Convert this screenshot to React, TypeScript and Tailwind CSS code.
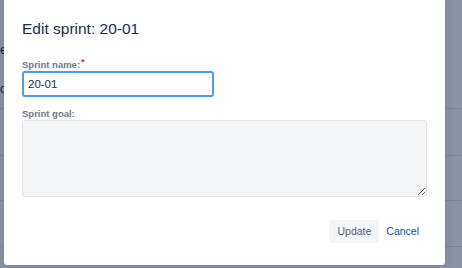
import React from 'react';

const font = { fontFamily: '"Liberation Sans", Arial, sans-serif' };

const BackgroundPage: React.FC = () => {
  return (
    <div className="flex h-full flex-col bg-white text-[#172b4d]">
      <div className="h-[108px] pt-[42px]">
        <div className="text-[13px] leading-[16px]">e</div>
        <div className="mt-[24px] text-[12px] leading-[14px]">o</div>
      </div>
      <div className="h-[47px] border-t border-[#dfe1e6]" />
      <div className="h-[45px] border-t border-[#dfe1e6]" />
      <div className="h-[46px] border-t border-[#dfe1e6]" />
      <div className="flex-1 border-t border-[#dfe1e6]" />
    </div>
  );
};

const EditSprintModal: React.FC = () => {
  return (
    <div className="absolute left-[4px] top-[-4px] flex h-[269px] w-[441px] flex-col rounded-[3px] bg-white pl-[18px] pr-[18px] pt-[24px] shadow-[0_0_8px_rgba(9,30,66,0.15)]">
      <h2 className="text-[15.5px] font-normal leading-[18px] text-[#172b4d]">Edit sprint: 20-01</h2>

      <label className="mt-[21px] text-[9.5px] font-semibold leading-[11px] text-[#6b778c]">
        Sprint name:<span className="relative -top-[3px] ml-[1px] text-[#de350b]">*</span>
      </label>
      <input
        type="text"
        defaultValue="20-01"
        className="mt-[1px] h-[26px] w-[192px] rounded-[3px] border-2 border-[#4c9aff] bg-white px-[4px] text-[11.5px] text-[#172b4d] outline-none"
        style={font}
      />

      <label className="mt-[11px] text-[9.5px] font-semibold leading-[11px] text-[#6b778c]">Sprint goal:</label>
      <textarea
        className="mt-[1px] h-[77px] w-[405px] rounded-[3px] border border-[#e2e4e9] bg-[#f4f5f7] outline-none"
        style={font}
      />

      <div className="mt-[23px] flex justify-end pr-[1px]">
        <button className="h-[23px] rounded-[3px] bg-[#f4f5f7] px-[8px] text-[10.5px] text-[#505f79]">Update</button>
        <button className="h-[23px] rounded-[3px] px-[7px] text-[10.5px] text-[#0052cc]">Cancel</button>
      </div>
    </div>
  );
};

const App: React.FC = () => {
  return (
    <div className="relative h-[268px] w-[462px] overflow-hidden" style={font}>
      <BackgroundPage />
      <div className="absolute inset-0 bg-[rgba(9,30,66,0.48)]" />
      <EditSprintModal />
    </div>
  );
};

export default App;
